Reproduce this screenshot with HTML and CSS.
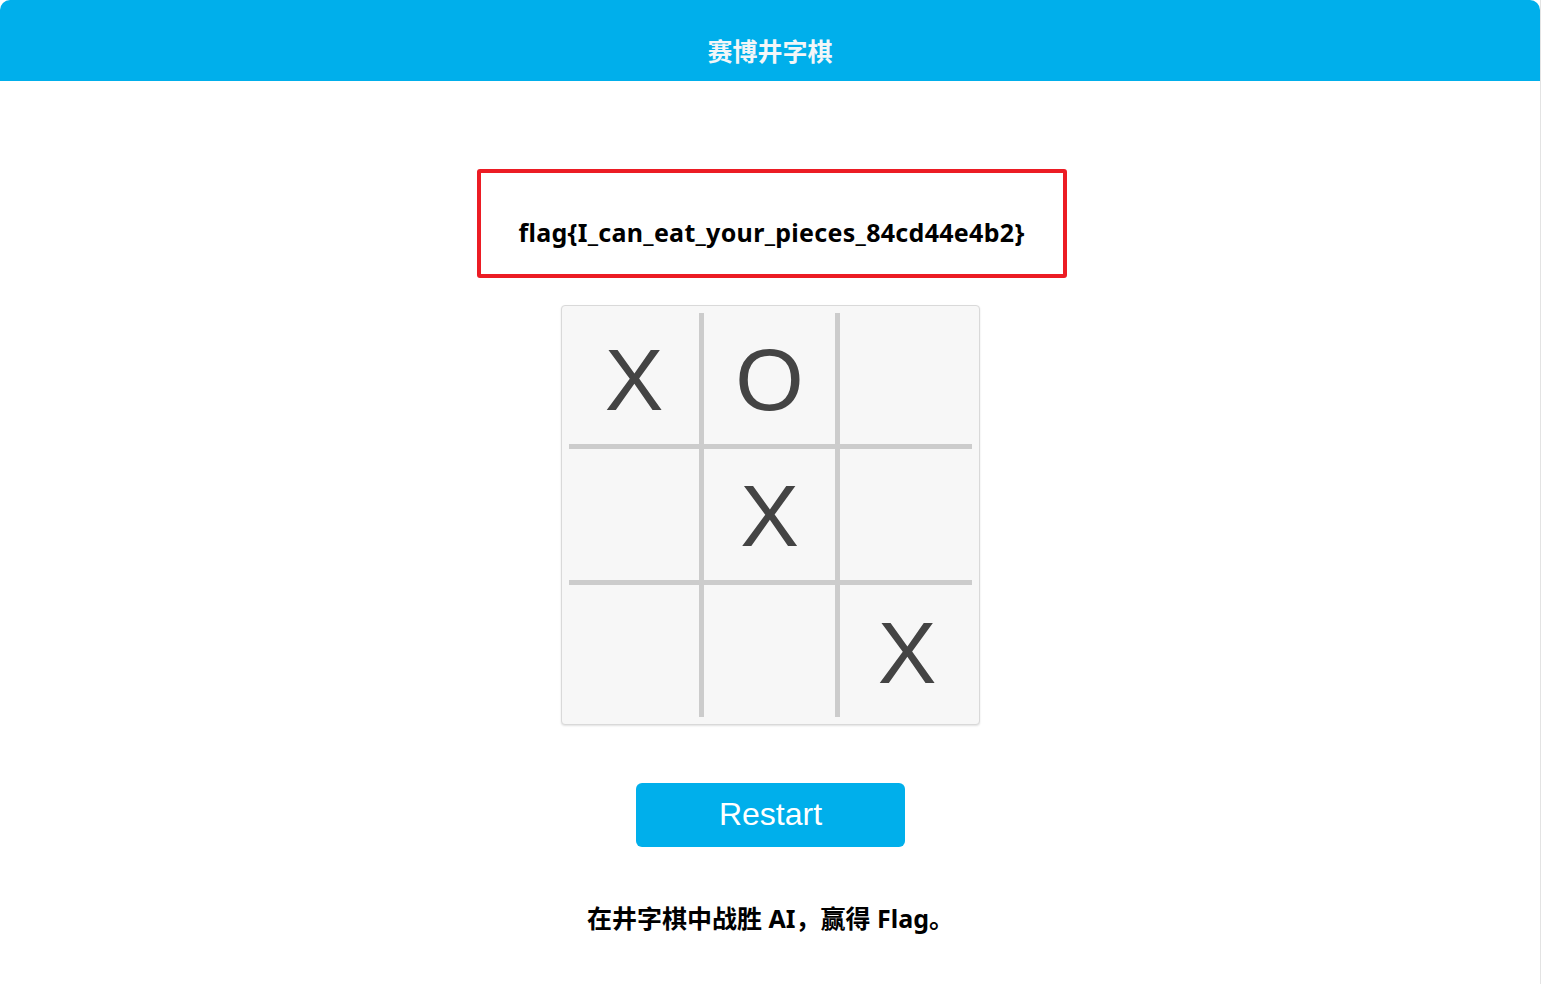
FILE: index.html
```html
<!DOCTYPE html>
<html lang="zh-CN">
<head>
<meta charset="utf-8">
<title>赛博井字棋</title>
<link rel="stylesheet" href="styles.css">
</head>
<body>
<div class="app">
  <header class="topbar"><h1 class="title">赛博井字棋</h1></header>
  <main class="content">
    <div class="flag-box"><p class="flag">flag{I_can_eat_your_pieces_84cd44e4b2}</p></div>
    <div class="board">
      <div class="cell">X</div>
      <div class="cell">O</div>
      <div class="cell"></div>
      <div class="cell"></div>
      <div class="cell">X</div>
      <div class="cell"></div>
      <div class="cell"></div>
      <div class="cell"></div>
      <div class="cell">X</div>
    </div>
    <button class="restart" type="button">Restart</button>
    <p class="hint">在井字棋中战胜 AI，赢得 Flag。</p>
  </main>
</div>
</body>
</html>
```

FILE: styles.css
```css
html, body {
  margin: 0;
  padding: 0;
  background: #ffffff;
}

.app {
  width: 1540px;
  min-height: 984px;
  border-right: 1px solid #e3e3e3;
  font-family: "Noto Sans", "Noto Sans CJK SC", sans-serif;
}

.topbar {
  height: 81px;
  background: #00afeb;
  border-radius: 10px 10px 0 0;
  display: flex;
  align-items: center;
  justify-content: center;
}

.title {
  margin: 0;
  padding-top: 18px;
  color: #f2f6f8;
  font-family: "Noto Sans CJK SC", sans-serif;
  font-size: 25px;
  font-weight: 700;
  line-height: 32px;
}

.content {
  display: flex;
  flex-direction: column;
  align-items: center;
  padding-top: 88px;
  padding-left: 1px;
}

.flag-box {
  width: 582px;
  height: 101px;
  margin-left: 2px;
  border: 4px solid #ec1c24;
  border-radius: 3px;
  display: flex;
  justify-content: center;
  align-items: flex-start;
}

.flag {
  margin: 43px 0 0;
  font-family: "Noto Sans", "Open Sans", sans-serif;
  font-weight: 700;
  font-size: 25px;
  line-height: 32px;
  color: #000;
  letter-spacing: 0.3px;
}

.board {
  margin-top: 27px;
  width: 403px;
  height: 404px;
  padding: 7px;
  background: #f7f7f7;
  border: 1px solid #d9d9d9;
  border-radius: 4px;
  box-shadow: 0 1px 2px rgba(0, 0, 0, 0.12);
  display: grid;
  grid-template-columns: 135px 136px 132px;
  grid-template-rows: 136px 136px 132px;
}

.cell {
  display: flex;
  align-items: center;
  justify-content: center;
  font-family: "Liberation Sans", Arial, sans-serif;
  font-size: 88px;
  color: #444444;
  line-height: 1;
  padding-top: 3px;
  box-sizing: border-box;
}

.cell:nth-child(3n+1),
.cell:nth-child(3n+2) {
  border-right: 5px solid #cccccc;
}

.cell:nth-child(3n) {
  padding-left: 2px;
}

.cell:nth-child(-n+6) {
  border-bottom: 5px solid #cccccc;
}

.restart {
  margin-top: 58px;
  width: 269px;
  height: 64px;
  border: none;
  border-radius: 6px;
  background: #00afeb;
  color: #ffffff;
  font-family: "Liberation Sans", Arial, sans-serif;
  font-size: 32px;
  padding: 0 0 2px;
  cursor: pointer;
}

.hint {
  margin: 54px 0 0;
  font-family: "Noto Sans", "Noto Sans CJK SC", sans-serif;
  font-weight: 700;
  font-size: 25px;
  line-height: 34px;
  color: #000;
}
```
